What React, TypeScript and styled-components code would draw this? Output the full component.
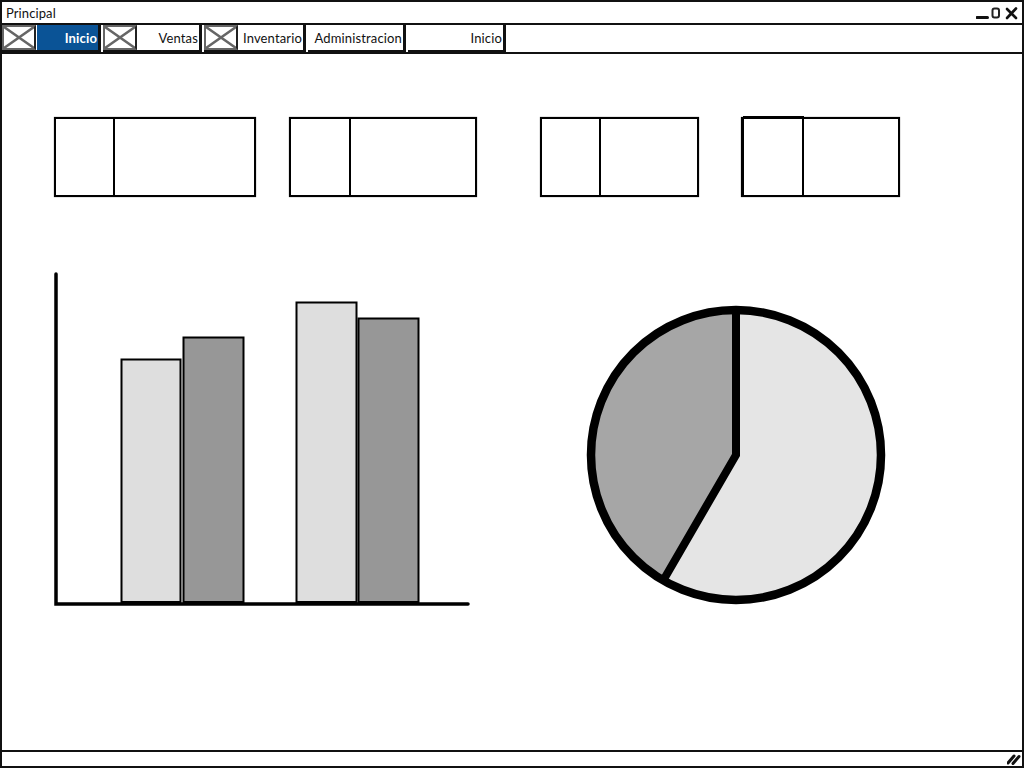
import React from "react";
import styled, { createGlobalStyle } from "styled-components";

const GlobalStyle = createGlobalStyle`
	html, body {
		margin: 0;
		padding: 0;
		background: #fff;
	}
	* {
		box-sizing: border-box;
	}
`;

const TABS = [
	{ label: "Inicio", width: 61, image: true, active: true },
	{ label: "Ventas", width: 61, image: true },
	{ label: "Inventario", width: 64, image: true },
	{ label: "Administracion", width: 95 },
	{ label: "Inicio", width: 95 },
];

const CARDS = [
	{ width: 202, split: 59, gap: 0 },
	{ width: 188, split: 60, gap: 33 },
	{ width: 159, split: 59, gap: 63 },
	{ width: 159, split: 61, gap: 42, heavy: true },
];

const BARS = [
	{ x: 121.5, w: 59, top: 359.5, light: true },
	{ x: 183.5, w: 60, top: 337.5 },
	{ x: 296.5, w: 60, top: 302.5, light: true },
	{ x: 358.5, w: 60, top: 318.5 },
];

const WindowControls = () => (
	<ControlsIcon width="46" height="14" viewBox="0 0 46 14">
		<path d="M1 11.5 H11.5" stroke="#111" strokeWidth="3" strokeLinecap="round" />
		<rect x="16.5" y="2.5" width="6.5" height="9" rx="2" fill="none" stroke="#222" strokeWidth="2" />
		<path d="M31 3 L40 12 M40 2.5 L31 12" stroke="#111" strokeWidth="2.6" strokeLinecap="round" />
	</ControlsIcon>
);

const ResizeGrip = () => (
	<svg width="14" height="12" viewBox="0 0 14 12">
		<path d="M1 10 L7 3 M6 10.5 L12 3.5" stroke="#111" strokeWidth="3" strokeLinecap="round" />
	</svg>
);

const BarChart = () => (
	<svg width="420" height="340" viewBox="50 270 420 340">
		{BARS.map((bar) => (
			<rect
				key={bar.x}
				x={bar.x}
				y={bar.top}
				width={bar.w}
				height={602 - bar.top}
				fill={bar.light ? "#dedede" : "#979797"}
				stroke="#000"
				strokeWidth="2"
			/>
		))}
		<path d="M56 274 V604 H468" fill="none" stroke="#000" strokeWidth="3.5" strokeLinecap="round" />
	</svg>
);

const PieChart = () => (
	<PieSvg width="300" height="300" viewBox="586 305 300 300">
		<circle cx="736" cy="455" r="145" fill="#e5e5e5" />
		<path d="M736 455 V310 A145 145 0 0 0 663.2 580.4 Z" fill="#a6a6a6" />
		<circle cx="736" cy="455" r="145" fill="none" stroke="#000" strokeWidth="8.5" />
		<path d="M736 310 V455 L663.2 580.4" fill="none" stroke="#000" strokeWidth="8" />
	</PieSvg>
);

const App = () => {
	return (
		<>
			<GlobalStyle />
			<WindowFrame>
				<TitleBar>
					<span>Principal</span>
					<WindowControls />
				</TitleBar>
				<TabBar>
					{TABS.map((tab, i) => (
						<Tab key={i}>
							{tab.image && (
								<ImageBox>
									<svg width="100%" height="100%" viewBox="0 0 32 26" preserveAspectRatio="none">
										<path d="M0 0 L32 26 M32 0 L0 26" stroke="#666" strokeWidth="3" />
									</svg>
								</ImageBox>
							)}
							<TabLabel $width={tab.width} $active={tab.active}>{tab.label}</TabLabel>
						</Tab>
					))}
				</TabBar>
				<Content>
					<CardRow>
						{CARDS.map((card, i) => (
							<Card key={i} $width={card.width} $gap={card.gap}>
								<CardSide $width={card.split} $heavy={card.heavy} />
							</Card>
						))}
					</CardRow>
					<ChartRow>
						<BarChart />
						<PieChart />
					</ChartRow>
				</Content>
				<StatusBar>
					<ResizeGrip />
				</StatusBar>
			</WindowFrame>
		</>
	);
};

export default App;

const WindowFrame = styled.div`
	width: 1024px;
	height: 768px;
	display: flex;
	flex-direction: column;
	border: 2px solid #111;
	background: #fff;
	font-family: "Lato", "Noto Sans", sans-serif;
	color: #111;
	overflow: hidden;
`;

const TitleBar = styled.header`
	height: 21px;
	flex: none;
	display: flex;
	justify-content: space-between;
	align-items: center;
	padding: 0 0 0 4px;
	font-size: 13px;
	letter-spacing: 0.1px;
`;

const ControlsIcon = styled.svg`
	margin-top: 1px;
`;

const TabBar = styled.nav`
	height: 31px;
	flex: none;
	display: flex;
	border-top: 2px solid #111;
	border-bottom: 2px solid #111;
`;

const Tab = styled.div`
	display: flex;
	margin-right: 2px;
	border-right: 3px solid #111;
	border-bottom: 2px solid #111;
`;

const ImageBox = styled.div`
	width: 34px;
	border: 2px solid #666;
	border-right-color: #222;
	margin-right: 1px;
	line-height: 0;
`;

const TabLabel = styled.div<{ $width: number; $active?: boolean }>`
	width: ${(p) => p.$width}px;
	display: flex;
	align-items: center;
	justify-content: flex-end;
	padding-right: 1px;
	font-size: 13px;
	letter-spacing: 0.15px;
	background: ${(p) => (p.$active ? "#0a5396" : "#fff")};
	color: ${(p) => (p.$active ? "#fff" : "#111")};
	font-weight: ${(p) => (p.$active ? 700 : 400)};
`;

const Content = styled.main`
	flex: 1;
	display: flex;
	flex-direction: column;
	padding: 63px 0 0 52px;
`;

const CardRow = styled.div`
	display: flex;
	height: 80px;
`;

const Card = styled.div<{ $width: number; $gap: number }>`
	width: ${(p) => p.$width}px;
	margin-left: ${(p) => p.$gap}px;
	border: 2px solid #000;
	box-shadow: 0 0 1px rgba(0, 0, 0, 0.6);
	display: flex;
`;

const CardSide = styled.div<{ $width: number; $heavy?: boolean }>`
	width: ${(p) => p.$width}px;
	border-right: 2px solid #000;
	${(p) => p.$heavy && "border-left: 1px solid #000; border-top: 2px solid #000; margin-top: -3px;"}
`;

const ChartRow = styled.div`
	display: flex;
	gap: 116px;
	margin-top: 73px;
	margin-left: -4px;
`;

const PieSvg = styled.svg`
	margin-top: 35px;
`;

const StatusBar = styled.footer`
	height: 16px;
	flex: none;
	margin-top: auto;
	display: flex;
	justify-content: flex-end;
	align-items: center;
	padding-right: 1px;
	border-top: 2px solid #111;
`;
